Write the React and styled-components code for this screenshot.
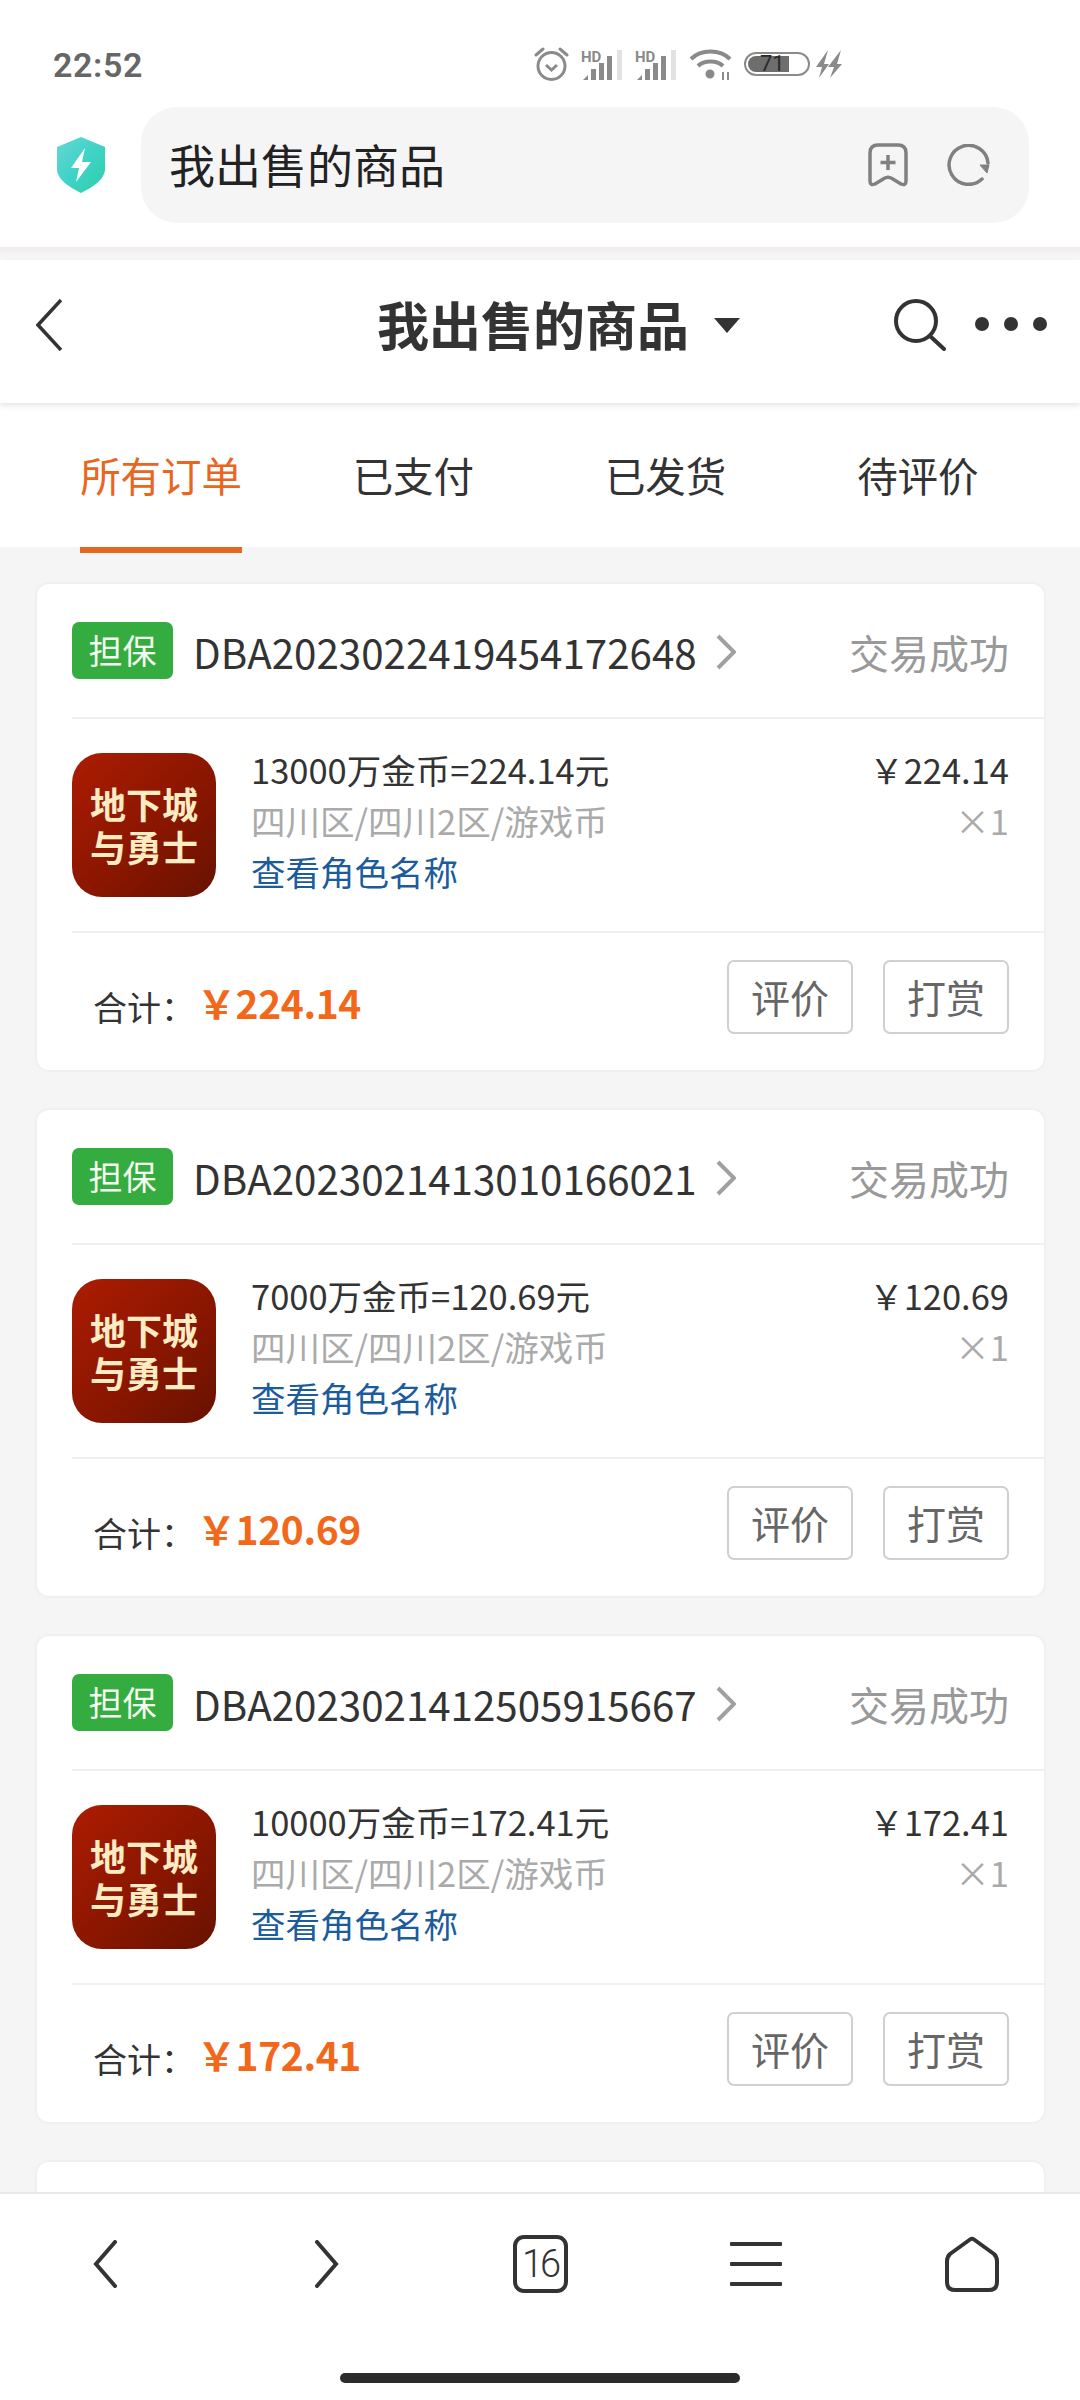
import styled, { createGlobalStyle } from 'styled-components';

const GlobalStyle = createGlobalStyle`
    html, body {
        margin: 0;
        padding: 0;
        background: #f5f5f5;
        font-family: "Noto Sans CJK SC", "Noto Sans", sans-serif;
    }
    * {
        box-sizing: border-box;
    }
`;

const orders = [
    { no: 'DBA2023022419454172648', title: '13000万金币=224.14元', price: '224.14' },
    { no: 'DBA2023021413010166021', title: '7000万金币=120.69元', price: '120.69' },
    { no: 'DBA2023021412505915667', title: '10000万金币=172.41元', price: '172.41' },
];

const tabs = ['所有订单', '已支付', '已发货', '待评价'];

const SignalIcon = () => (
    <svg width="42" height="31" viewBox="0 0 42 31">
        <text x="0" y="13" fontFamily="Roboto, sans-serif" fontWeight="700" fontSize="15" fill="#8a8a8a">HD</text>
        <path d="M2 31 L7 26 V31 Z" fill="#8a8a8a" />
        <rect x="10" y="20" width="5" height="11" fill="#8a8a8a" />
        <rect x="18" y="14" width="5" height="17" fill="#8a8a8a" />
        <rect x="26" y="7" width="5" height="24" fill="#8a8a8a" />
        <rect x="36" y="1" width="5" height="30" fill="#e2e2e2" />
    </svg>
);

const StatusIcons = () => (
    <StatusGroup>
        <svg width="35" height="34" viewBox="0 0 35 34" fill="none" stroke="#8a8a8a" strokeWidth="3">
            <circle cx="17.5" cy="19" r="13.5" />
            <path d="M12 18 L17.5 23 L23 18" />
            <path d="M2 8 L9 2 M33 8 L26 2" strokeLinecap="round" />
        </svg>
        <SignalIcon />
        <SignalIcon />
        <svg width="43" height="34" viewBox="0 0 43 34" fill="none" stroke="#8a8a8a" strokeWidth="4">
            <path d="M2 12 C 12 2, 31 2, 41 12" />
            <path d="M9 19 C 15 13, 28 13, 34 19" />
            <circle cx="21" cy="27" r="2.5" fill="#8a8a8a" />
            <path d="M34 25 V33 M39 33 V25" strokeWidth="2" />
        </svg>
        <Battery>
            <BatteryFill style={{ width: '71%' }} />
            <BatteryText>71</BatteryText>
        </Battery>
        <svg width="28" height="30" viewBox="0 0 28 30" fill="#8a8a8a">
            <path d="M13 1 L1 18 H7 L4 29 L14 15 H9 Z" />
            <path d="M26 1 L13 18 H19 L15 29 L27 15 H22 Z" />
        </svg>
    </StatusGroup>
);

const Shield = () => (
    <svg width="50" height="56" viewBox="0 0 50 56">
        <defs>
            <linearGradient id="shieldFill" x1="0" y1="0" x2="1" y2="1">
                <stop offset="0" stopColor="#64d8d2" />
                <stop offset="0.5" stopColor="#3fd3c8" />
                <stop offset="1" stopColor="#2ecfa6" />
            </linearGradient>
        </defs>
        <path d="M25 0 L49 10 V32 C49 43 35 51 25 56 C15 51 1 43 1 32 V10 Z" fill="url(#shieldFill)" />
        <path d="M29 11 L15 31 H23 L20 45 L35 25 H26 Z" fill="#ffffff" />
    </svg>
);

const Order = ({ order }) => (
    <Card>
        <CardHead>
            <Badge>担保</Badge>
            <OrderNo>{order.no}</OrderNo>
            <svg width="20" height="36" viewBox="0 0 20 36" fill="none" stroke="#a0a0a0" strokeWidth="4">
                <path d="M2 2 L18 18 L2 34" />
            </svg>
            <Status>交易成功</Status>
        </CardHead>
        <CardBody>
            <GameIcon>
                地下城
                <br />
                与勇士
            </GameIcon>
            <ItemInfo>
                <ItemLine>{order.title}</ItemLine>
                <ItemLine $muted>四川区/四川2区/游戏币</ItemLine>
                <ItemLine $link>查看角色名称</ItemLine>
            </ItemInfo>
            <ItemPrice>
                <ItemLine>￥{order.price}</ItemLine>
                <ItemLine $muted>×1</ItemLine>
            </ItemPrice>
        </CardBody>
        <CardFoot>
            <TotalLabel>合计：</TotalLabel>
            <TotalPrice>￥{order.price}</TotalPrice>
            <Actions>
                <ActionButton>评价</ActionButton>
                <ActionButton>打赏</ActionButton>
            </Actions>
        </CardFoot>
    </Card>
);

const App = () => {
    return (
        <Shell>
            <GlobalStyle />
            <StatusBar>
                <Clock>22:52</Clock>
                <StatusIcons />
            </StatusBar>
            <BrowserBar>
                <Shield />
                <AddressBox>
                    <AddressText>我出售的商品</AddressText>
                    <svg width="40" height="44" viewBox="0 0 40 44" fill="none" stroke="#808080" strokeWidth="3.5">
                        <path d="M2 10 Q2 2 10 2 H30 Q38 2 38 10 V38 Q38 43 33 41 L24 35.5 Q20 33 16 35.5 L7 41 Q2 43 2 38 Z" strokeLinejoin="round" />
                        <path d="M20 12 V27 M12.5 19.5 H27.5" />
                    </svg>
                    <svg width="44" height="42" viewBox="0 0 44 42" fill="none" stroke="#808080" strokeWidth="3.5">
                        <path d="M35 35 A19.5 19.5 0 1 1 41 19" strokeLinecap="round" />
                        <path d="M33 21 H42 L40 29 Z" fill="#808080" strokeWidth="1" />
                    </svg>
                </AddressBox>
            </BrowserBar>
            <BrowserEdge />
            <PageHeader>
                <svg width="26" height="52" viewBox="0 0 26 52" fill="none" stroke="#333333" strokeWidth="3.5">
                    <path d="M25 1 L2 26 L25 51" />
                </svg>
                <TitleGroup>
                    <Title>我出售的商品</Title>
                    <Caret />
                </TitleGroup>
                <HeaderActions>
                    <svg width="52" height="52" viewBox="0 0 52 52" fill="none" stroke="#333333" strokeWidth="4">
                        <circle cx="22" cy="22" r="20" />
                        <path d="M36 37 L50 50" strokeLinecap="round" />
                    </svg>
                    <Dots>
                        <Dot />
                        <Dot />
                        <Dot />
                    </Dots>
                </HeaderActions>
            </PageHeader>
            <Tabs>
                {tabs.map((tab, i) => (
                    <Tab key={tab}>
                        <TabLabel $active={i === 0}>{tab}</TabLabel>
                    </Tab>
                ))}
            </Tabs>
            <List>
                {orders.map((order) => (
                    <Order key={order.no} order={order} />
                ))}
                <Card />
            </List>
            <BottomNav>
                <NavIcons>
                    <NavItem>
                        <svg width="30" height="48" viewBox="0 0 30 48" fill="none" stroke="#333333" strokeWidth="4" strokeLinecap="round">
                            <path d="M22 2 L3 24 L22 46" />
                        </svg>
                    </NavItem>
                    <NavItem>
                        <svg width="30" height="48" viewBox="0 0 30 48" fill="none" stroke="#333333" strokeWidth="4" strokeLinecap="round">
                            <path d="M8 2 L27 24 L8 46" />
                        </svg>
                    </NavItem>
                    <NavItem>
                        <TabCount>16</TabCount>
                    </NavItem>
                    <NavItem>
                        <MenuLines>
                            <MenuLine />
                            <MenuLine />
                            <MenuLine />
                        </MenuLines>
                    </NavItem>
                    <NavItem>
                        <svg width="54" height="56" viewBox="0 0 54 56" fill="none" stroke="#333333" strokeWidth="4" strokeLinejoin="round">
                            <path d="M25 3.5 Q27 2 29 3.5 L49 18 Q52 21 52 25 V46 Q52 54 44 54 H10 Q2 54 2 46 V25 Q2 21 5 18 Z" />
                        </svg>
                    </NavItem>
                </NavIcons>
                <HomeBar />
            </BottomNav>
        </Shell>
    );
};

const Shell = styled.div`
    width: 1080px;
    height: 2400px;
    display: flex;
    flex-direction: column;
    overflow: hidden;
    background: #f5f5f5;
`;

const StatusBar = styled.div`
    height: 100px;
    flex: none;
    background: #ffffff;
    display: flex;
    align-items: flex-start;
    padding: 47px 237px 0 53px;
`;

const Clock = styled.div`
    font-family: Roboto, sans-serif;
    font-weight: 600;
    font-size: 34px;
    line-height: 36px;
    letter-spacing: 0.6px;
    color: #666666;
`;

const StatusGroup = styled.div`
    margin-left: auto;
    display: flex;
    align-items: center;
    gap: 12px;
`;

const Battery = styled.div`
    position: relative;
    width: 66px;
    height: 24px;
    border: 2.5px solid #8a8a8a;
    border-radius: 12px;
    padding: 2px;
    margin-right: -7px;
`;

const BatteryFill = styled.div`
    height: 100%;
    background: #6e6e6e;
    border-radius: 8px 0 0 8px;
`;

const BatteryText = styled.span`
    position: absolute;
    left: 14px;
    top: -3px;
    font-family: Roboto, sans-serif;
    font-size: 22px;
    line-height: 25px;
    color: #2a2a2a;
`;

const BrowserBar = styled.div`
    height: 147px;
    flex: none;
    background: #ffffff;
    display: flex;
    align-items: center;
    padding: 7px 51px 24px 56px;
`;

const AddressBox = styled.div`
    margin-left: 35px;
    flex: 1;
    height: 116px;
    background: #f5f5f5;
    border-radius: 36px;
    display: flex;
    align-items: center;
    padding: 0 38px 0 28px;
    gap: 39px;
`;

const AddressText = styled.div`
    flex: 1;
    font-size: 46px;
    color: #222222;
    padding-bottom: 5px;
`;

const BrowserEdge = styled.div`
    height: 13px;
    flex: none;
    background: linear-gradient(#eeecec, #fbfafa);
`;

const PageHeader = styled.div`
    height: 143px;
    flex: none;
    background: #ffffff;
    display: grid;
    grid-template-columns: 341px auto 1fr;
    align-items: start;
    padding: 39px 33px 0 36px;
    box-shadow: 0 2px 6px rgba(0, 0, 0, 0.12);
    position: relative;
`;

const TitleGroup = styled.div`
    display: flex;
    align-items: center;
    gap: 25px;
    margin-top: -2px;
`;

const Title = styled.h1`
    margin: 0;
    padding-bottom: 2px;
    font-size: 52px;
    line-height: 54px;
    font-weight: 700;
    color: #333333;
`;

const Caret = styled.div`
    width: 0;
    height: 0;
    border-left: 13px solid transparent;
    border-right: 13px solid transparent;
    border-top: 15px solid #333333;
`;

const HeaderActions = styled.div`
    display: flex;
    align-items: flex-start;
    justify-content: flex-end;
    gap: 29px;
`;

const Dots = styled.div`
    display: flex;
    gap: 15px;
    padding-top: 18px;
`;

const Dot = styled.div`
    width: 14px;
    height: 14px;
    border-radius: 50%;
    background: #333333;
`;

const Tabs = styled.div`
    height: 144px;
    flex: none;
    background: #ffffff;
    display: grid;
    grid-template-columns: repeat(4, 1fr);
    padding: 0 36px 0 35px;
`;

const Tab = styled.div`
    display: flex;
    justify-content: center;
`;

const TabLabel = styled.div`
    height: 150px;
    padding-top: 45px;
    font-size: 40.5px;
    line-height: 54px;
    color: ${(p) => (p.$active ? '#e8661f' : '#333333')};
    border-bottom: ${(p) => (p.$active ? '6px solid #e8661f' : 'none')};
    position: relative;
`;

const List = styled.div`
    flex: 1;
    min-height: 0;
    overflow: hidden;
    padding: 35px 34px 0 35px;
    display: flex;
    flex-direction: column;
    gap: 36px;
`;

const Card = styled.div`
    flex: none;
    height: 490px;
    background: #ffffff;
    border: 2px solid #f0f0f0;
    border-radius: 14px;
`;

const CardHead = styled.div`
    height: 135px;
    margin-left: 35px;
    padding: 2px 35px 0 0;
    display: flex;
    align-items: center;
    border-bottom: 2px solid #f0f0f0;
`;

const Badge = styled.div`
    width: 101px;
    height: 57px;
    background: #35ac3f;
    border-radius: 7px;
    color: #f4fbf0;
    font-size: 34px;
    line-height: 55px;
    text-align: center;
    margin: -2px 20px 0 0;
`;

const OrderNo = styled.div`
    font-size: 40.3px;
    color: #333333;
    margin-right: 19px;
`;

const Status = styled.div`
    margin-left: auto;
    font-size: 40px;
    color: #999999;
`;

const CardBody = styled.div`
    height: 214px;
    margin-left: 35px;
    padding: 34px 35px 0 0;
    display: flex;
    align-items: flex-start;
    border-bottom: 2px solid #f0f0f0;
`;

const GameIcon = styled.div`
    width: 144px;
    height: 144px;
    flex: none;
    border-radius: 30px;
    background: linear-gradient(135deg, #ac1c02 0%, #8a1600 55%, #671200 100%);
    padding-top: 32px;
    text-align: center;
    color: #fdebc4;
    font-family: "Liberation Sans", "Noto Sans CJK SC", sans-serif;
    font-size: 36px;
    font-weight: 700;
    line-height: 43px;
`;

const ItemInfo = styled.div`
    margin: -9px 0 0 35px;
    flex: 1;
`;

const ItemLine = styled.div`
    font-size: 34.5px;
    line-height: 51px;
    white-space: nowrap;
    color: ${(p) => (p.$muted ? '#aaaaaa' : p.$link ? '#1c5c9c' : '#333333')};
`;

const ItemPrice = styled.div`
    margin-top: -9px;
    text-align: right;
`;

const CardFoot = styled.div`
    height: 137px;
    padding: 0 35px 0 56px;
    display: flex;
    align-items: flex-start;
`;

const TotalLabel = styled.div`
    font-size: 34px;
    line-height: 50px;
    color: #333333;
    padding-top: 49px;
`;

const TotalPrice = styled.div`
    font-size: 39px;
    line-height: 50px;
    font-weight: 700;
    letter-spacing: -0.4px;
    color: #f2681a;
    padding: 44px 0 0 2px;
`;

const Actions = styled.div`
    margin-left: auto;
    display: flex;
    gap: 30px;
    padding-top: 27px;
`;

const ActionButton = styled.div`
    width: 126px;
    height: 74px;
    border: 2px solid #d0d0d0;
    border-radius: 7px;
    color: #666666;
    font-size: 39px;
    line-height: 68px;
    text-align: center;
`;

const BottomNav = styled.div`
    height: 208px;
    flex: none;
    background: #ffffff;
    border-top: 2px solid #e8e8e8;
    display: flex;
    flex-direction: column;
    align-items: center;
    position: relative;
`;

const NavIcons = styled.div`
    width: 100%;
    height: 140px;
    display: grid;
    grid-template-columns: repeat(5, 1fr);
`;

const NavItem = styled.div`
    display: flex;
    align-items: center;
    justify-content: center;
`;

const TabCount = styled.div`
    width: 55px;
    height: 58px;
    border: 4px solid #333333;
    border-radius: 11px;
    font-family: Roboto, sans-serif;
    font-weight: 300;
    font-size: 38px;
    line-height: 50px;
    letter-spacing: -3px;
    text-align: center;
    color: #333333;
`;

const MenuLines = styled.div`
    width: 52px;
    display: flex;
    flex-direction: column;
    gap: 16px;
`;

const MenuLine = styled.div`
    height: 4px;
    background: #333333;
    border-radius: 1px;
`;

const HomeBar = styled.div`
    width: 400px;
    height: 10px;
    margin-top: 39px;
    border-radius: 5px;
    background: #2b2b2b;
`;

export default App;
